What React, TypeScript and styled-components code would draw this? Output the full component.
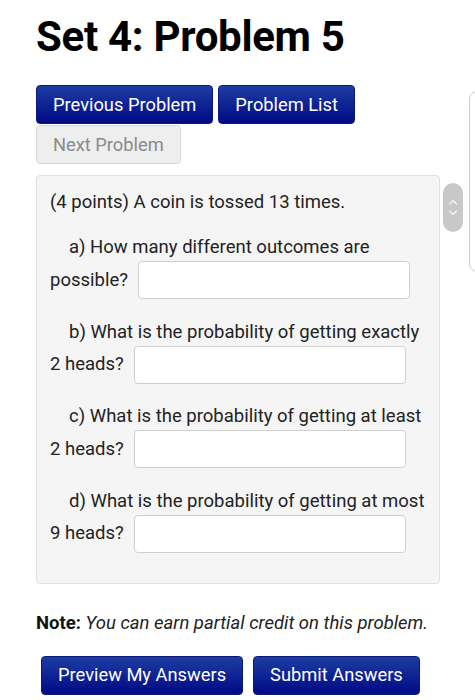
import React from 'react';
import styled, { createGlobalStyle } from 'styled-components';

const GlobalStyle = createGlobalStyle`
  html, body {
    margin: 0;
    padding: 0;
    background: #fff;
  }
  body {
    font-family: Roboto, "Liberation Sans", Arial, sans-serif;
    color: #222;
    font-size: 18.5px;
  }
`;

const Page = styled.div`
  position: relative;
  width: 475px;
  height: 700px;
  overflow: hidden;
  padding: 0 0 0 36px;
  box-sizing: border-box;
`;

const Title = styled.h1`
  margin: 12px 0 0;
  font-size: 42px;
  line-height: 1.2;
  font-weight: 700;
  color: #000;
  letter-spacing: -0.3px;
`;

const NavBar = styled.div`
  display: flex;
  flex-wrap: wrap;
  column-gap: 5px;
  row-gap: 1px;
  width: 404px;
  margin-top: 23px;
`;

const Button = styled.button<{ $disabled?: boolean }>`
  height: 39px;
  padding: 0 16px;
  border-radius: 4px;
  font-family: Roboto, "Liberation Sans", Arial, sans-serif;
  font-size: 18.3px;
  line-height: 1;
  white-space: nowrap;
  cursor: pointer;
  color: ${(p) => (p.$disabled ? '#8a8a8a' : '#fff')};
  border: 1px solid ${(p) => (p.$disabled ? '#d8d8d8' : '#0a1a78')};
  background: ${(p) =>
    p.$disabled ? '#eeeeee' : 'linear-gradient(to bottom, #1d3da3, #000a84)'};
`;

const ProblemBox = styled.div`
  margin-top: 11px;
  width: 404px;
  box-sizing: border-box;
  padding: 13px 13px 30px;
  background: #f5f5f5;
  border: 1px solid #e0e0e0;
  border-radius: 4px;
  line-height: 27px;
`;

const Intro = styled.div`
  margin-bottom: 18px;
`;

const Part = styled.div`
  & + & {
    margin-top: 19.5px;
  }
`;

const Question = styled.div`
  padding-left: 19px;
  white-space: nowrap;
`;

const AnswerRow = styled.div`
  display: flex;
  align-items: center;
  gap: 10px;
`;

const AnswerInput = styled.input`
  width: 272px;
  height: 38px;
  box-sizing: border-box;
  border: 1px solid #cfcfcf;
  border-radius: 4px;
  background: #fff;
  font-size: 18px;
  padding: 0 8px;
`;

const Note = styled.p`
  margin: 26px 0 0;
  line-height: 27px;
  color: #111;
`;

const Em = styled.em`
  color: #222;
`;

const SubmitBar = styled.div`
  display: flex;
  gap: 10px;
  margin: 19px 0 0 5px;
`;

/* floating page-scroll handle */
const ScrollHandle = styled.div`
  position: absolute;
  left: 443px;
  top: 183px;
  width: 20px;
  height: 49px;
  border-radius: 10px;
  background: #c8c8c8;
  display: flex;
  flex-direction: column;
  align-items: center;
  justify-content: center;
  gap: 5px;
`;

/* edge of a side panel peeking in from the right */
const SidePanel = styled.div`
  position: absolute;
  left: 469px;
  top: 91px;
  width: 30px;
  height: 181px;
  border: 1.5px solid #cdcdcd;
  border-radius: 8px;
  box-sizing: border-box;
`;

const Chevron = ({ up }: { up?: boolean }) => (
  <svg width="10" height="6" viewBox="0 0 10 6">
    <path
      d={up ? 'M1.5 5 L5 1.5 L8.5 5' : 'M1.5 1 L5 4.5 L8.5 1'}
      fill="none"
      stroke="#f4f4f4"
      strokeWidth="1.4"
      strokeLinecap="round"
      strokeLinejoin="round"
    />
  </svg>
);

const parts = [
  { q: 'a) How many different outcomes are', label: 'possible?' },
  { q: 'b) What is the probability of getting exactly', label: '2 heads?' },
  { q: 'c) What is the probability of getting at least', label: '2 heads?' },
  { q: 'd) What is the probability of getting at most', label: '9 heads?' },
];

export default function App() {
  return (
    <>
      <GlobalStyle />
      <Page>
        <Title>Set 4: Problem 5</Title>
        <NavBar>
          <Button>Previous Problem</Button>
          <Button>Problem List</Button>
          <Button $disabled>Next Problem</Button>
        </NavBar>
        <ProblemBox>
          <Intro>(4 points) A coin is tossed 13 times.</Intro>
          {parts.map((p) => (
            <Part key={p.q}>
              <Question>{p.q}</Question>
              <AnswerRow>
                <span>{p.label}</span>
                <AnswerInput type="text" />
              </AnswerRow>
            </Part>
          ))}
        </ProblemBox>
        <Note>
          <b>Note:</b> <Em>You can earn partial credit on this problem.</Em>
        </Note>
        <SubmitBar>
          <Button>Preview My Answers</Button>
          <Button>Submit Answers</Button>
        </SubmitBar>
        <ScrollHandle>
          <Chevron up />
          <Chevron />
        </ScrollHandle>
        <SidePanel />
      </Page>
    </>
  );
}
